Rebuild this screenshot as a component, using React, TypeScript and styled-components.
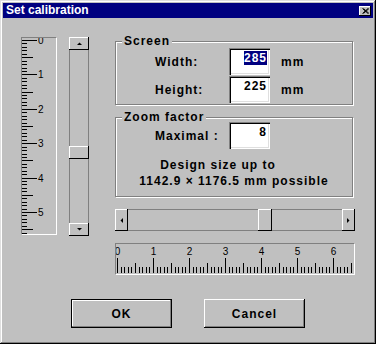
import React from 'react';
import styled, { createGlobalStyle } from 'styled-components';

const GlobalStyle = createGlobalStyle`
  html, body {
    margin: 0;
    padding: 0;
    background: #c0c0c0;
  }
  body {
    font-family: "Liberation Sans", Arial, sans-serif;
  }
`;

const Window = styled.div`
  box-sizing: border-box;
  width: 376px;
  height: 344px;
  padding: 3px;
  background: #c0c0c0;
  display: flex;
  flex-direction: column;
  box-shadow: inset -1px -1px #000, inset 1px 1px #dfdfdf, inset -2px -2px #808080,
    inset 2px 2px #fff;
`;

const TitleBar = styled.div`
  height: 15px;
  background: #000080;
  display: flex;
  align-items: center;
  padding: 0 2px 0 3px;
`;

const Title = styled.div`
  color: #fff;
  font-weight: bold;
  font-size: 12px;
  line-height: 15px;
`;

const CloseButton = styled.div`
  margin-left: auto;
  width: 12px;
  height: 10px;
  background: #c0c0c0;
  box-shadow: inset -1px -1px #000, inset 1px 1px #fff;
  display: flex;
  align-items: center;
  justify-content: center;
`;

const Main = styled.div`
  display: flex;
  align-items: flex-start;
  padding: 17px 0 0 18px;
`;

const RulerBox = styled.div<{ $w: number; $h: number }>`
  box-sizing: border-box;
  width: ${({ $w }) => $w}px;
  height: ${({ $h }) => $h}px;
  flex-shrink: 0;
  border: 1px solid;
  border-color: #808080 #fff #fff #808080;
  background: #c0c0c0;
  svg {
    display: block;
  }
`;

const SideRuler = styled(RulerBox)`
  margin-top: 2px;
`;

const BottomRuler = styled(RulerBox)`
  margin-top: 12px;
`;

const ScrollFrame = styled.div<{ $vertical?: boolean }>`
  display: flex;
  flex-direction: ${({ $vertical }) => ($vertical ? 'column' : 'row')};
  flex-shrink: 0;
  background: #c0c0c0;
`;

const ArrowButton = styled.div<{ $vertical?: boolean }>`
  flex: none;
  width: ${({ $vertical }) => ($vertical ? '100%' : '13px')};
  height: ${({ $vertical }) => ($vertical ? '13px' : '100%')};
  background: #c0c0c0;
  box-shadow: inset -1px -1px #000, inset 1px 1px #fff;
  display: flex;
  align-items: center;
  justify-content: center;
`;

const Track = styled.div<{ $vertical?: boolean }>`
  flex: 1;
  display: flex;
  flex-direction: ${({ $vertical }) => ($vertical ? 'column' : 'row')};
  box-shadow: ${({ $vertical }) =>
    $vertical
      ? 'inset 1px 0 #808080, inset -1px 0 #808080'
      : 'inset 0 1px #808080, inset 0 -1px #808080'};
`;

const Thumb = styled.div<{ $vertical?: boolean }>`
  flex: none;
  width: ${({ $vertical }) => ($vertical ? '100%' : '14px')};
  height: ${({ $vertical }) => ($vertical ? '13px' : '100%')};
  background: #c0c0c0;
  box-shadow: inset -1px -1px #000, inset 1px 1px #fff;
`;

const RightCol = styled.div`
  margin-left: 26px;
  width: 240px;
  display: flex;
  flex-direction: column;
`;

const Group = styled.fieldset<{ $bottom: number; $gapTop?: number }>`
  box-sizing: border-box;
  width: 238px;
  min-width: 0;
  margin: ${({ $gapTop }) => $gapTop ?? 0}px 0 0 0;
  padding: 0 0 ${({ $bottom }) => $bottom}px 0;
  border: 1px solid #808080;
  box-shadow: 1px 1px 0 #fff, inset 1px 1px 0 #fff;
`;

const Legend = styled.legend`
  margin-left: 6px;
  padding: 0 2px;
  font-weight: bold;
  font-size: 12px;
  line-height: 13px;
  letter-spacing: 1px;
  background: #c0c0c0;
`;

const Rows = styled.div`
  display: flex;
  flex-direction: column;
  gap: 1px;
`;

const Row = styled.div<{ $shift?: number }>`
  display: flex;
  align-items: center;
  height: 27px;
  padding-left: 39px;
  margin-top: ${({ $shift }) => $shift ?? 0}px;
`;

const Label = styled.div`
  width: 74px;
  font-weight: bold;
  font-size: 12px;
  letter-spacing: 1px;
`;

const Field = styled.div`
  box-sizing: border-box;
  width: 41px;
  height: 27px;
  padding: 2px 3px 0 0;
  background: #fff;
  text-align: right;
  font-weight: bold;
  font-size: 12px;
  line-height: 16px;
  letter-spacing: 1px;
  box-shadow: inset 1px 1px #808080, inset 2px 2px #000, inset -1px -1px #fff,
    inset -2px -2px #dfdfdf;
`;

const Selected = styled.span`
  background: #000080;
  color: #fff;
`;

const Unit = styled.div`
  margin-left: 11px;
  font-weight: bold;
  font-size: 12px;
  letter-spacing: 1px;
`;

const Note = styled.div`
  margin-top: 8px;
  text-align: center;
  font-weight: bold;
  font-size: 12px;
  line-height: 16px;
  letter-spacing: 1px;
`;

const NoteLine = styled.div<{ $offset?: number }>`
  padding-right: ${({ $offset }) => $offset ?? 0}px;
`;

const ButtonRow = styled.div`
  margin-top: 24px;
  display: flex;
  justify-content: center;
  gap: 32px;
`;

const PushButton = styled.button<{ $default?: boolean }>`
  width: 101px;
  height: 29px;
  padding: 0;
  border: none;
  background: #c0c0c0;
  color: #000;
  font-family: "Liberation Sans", Arial, sans-serif;
  font-weight: bold;
  font-size: 12px;
  letter-spacing: 1px;
  box-shadow: ${({ $default }) =>
    $default
      ? 'inset 0 0 0 1px #000, inset -2px -2px #808080, inset 2px 2px #fff'
      : 'inset -1px -1px #000, inset 1px 1px #fff, inset -2px -2px #808080'};
`;

type Dir = 'up' | 'down' | 'left' | 'right';

const Arrow = ({ dir }: { dir: Dir }) => {
  const pts = {
    up: '0,3 5,3 2.5,0.5',
    down: '0,0 5,0 2.5,2.5',
    left: '3,0 3,5 0.5,2.5',
    right: '0,0 0,5 2.5,2.5',
  }[dir];
  const vertical = dir === 'up' || dir === 'down';
  return (
    <svg width={vertical ? 5 : 3} height={vertical ? 3 : 5}>
      <polygon points={pts} fill="#000" />
    </svg>
  );
};

const ScrollBar = ({
  vertical,
  value,
  className,
}: {
  vertical?: boolean;
  value: number;
  className?: string;
}) => (
  <ScrollFrame $vertical={vertical} className={className}>
    <ArrowButton $vertical={vertical}>
      <Arrow dir={vertical ? 'up' : 'left'} />
    </ArrowButton>
    <Track $vertical={vertical}>
      <div style={{ flexGrow: value }} />
      <Thumb $vertical={vertical} />
      <div style={{ flexGrow: 1 - value }} />
    </Track>
    <ArrowButton $vertical={vertical}>
      <Arrow dir={vertical ? 'down' : 'right'} />
    </ArrowButton>
  </ScrollFrame>
);

const VScroll = styled(ScrollBar)`
  width: 20px;
  height: 199px;
  margin: 2px 0 0 12px;
`;

const HScroll = styled(ScrollBar)`
  width: 240px;
  height: 22px;
  margin-top: 12px;
`;

const RulerText = styled.text`
  font-family: "Liberation Sans", Arial, sans-serif;
  font-size: 10px;
  fill: #000;
`;

// vertical ruler, 3.44px per mm
const VerticalScale = () => {
  const parts: React.ReactNode[] = [];
  for (let i = 0; i <= 60; i++) {
    const y = Math.round(2 + i * 3.44) + 0.5;
    if (y > 196) break;
    const len = i % 10 === 0 ? 15 : i % 5 === 0 ? 11 : 5;
    parts.push(<line key={'t' + i} x1={0} x2={len} y1={y} y2={y} stroke="#000" />);
    if (i % 10 === 0) {
      parts.push(
        <RulerText key={'l' + i} x={16} y={y + 3.5}>
          {i / 10}
        </RulerText>
      );
    }
  }
  return (
    <svg width={34} height={196}>
      {parts}
    </svg>
  );
};

// horizontal ruler, 3.6px per mm
const HorizontalScale = () => {
  const parts: React.ReactNode[] = [];
  for (let i = 0; i <= 70; i++) {
    const x = Math.round(1 + i * 3.6) + 0.5;
    if (x > 238) break;
    const top = i % 10 === 0 ? 14 : i % 5 === 0 ? 19 : 23;
    parts.push(<line key={'t' + i} x1={x} x2={x} y1={top} y2={29} stroke="#000" />);
    if (i % 10 === 0) {
      parts.push(
        <RulerText key={'l' + i} x={x} y={11} textAnchor="middle">
          {i / 10}
        </RulerText>
      );
    }
  }
  return (
    <svg width={238} height={30}>
      {parts}
    </svg>
  );
};

export default function App() {
  return (
    <>
      <GlobalStyle />
      <Window>
        <TitleBar>
          <Title>Set calibration</Title>
          <CloseButton>
            <svg width={7} height={6}>
              <path d="M0.5 0.5 L6 5.5 M1.5 0.5 L7 5.5 M6 0.5 L0.5 5.5 M7 0.5 L1.5 5.5" stroke="#000" strokeWidth={1} />
            </svg>
          </CloseButton>
        </TitleBar>
        <Main>
          <SideRuler $w={36} $h={198}>
            <VerticalScale />
          </SideRuler>
          <VScroll vertical value={0.6} />
          <RightCol>
            <Group $bottom={1}>
              <Legend>Screen</Legend>
              <Rows>
                <Row>
                  <Label>Width:</Label>
                  <Field>
                    <Selected>285</Selected>
                  </Field>
                  <Unit>mm</Unit>
                </Row>
                <Row>
                  <Label>Height:</Label>
                  <Field>225</Field>
                  <Unit>mm</Unit>
                </Row>
              </Rows>
            </Group>
            <Group $bottom={7} $gapTop={6}>
              <Legend>Zoom factor</Legend>
              <Row $shift={-2}>
                <Label>Maximal :</Label>
                <Field>8</Field>
              </Row>
              <Note>
                <NoteLine $offset={32}>Design size up to</NoteLine>
                <NoteLine>1142.9 × 1176.5 mm possible</NoteLine>
              </Note>
            </Group>
            <HScroll value={0.65} />
            <BottomRuler $w={240} $h={32}>
              <HorizontalScale />
            </BottomRuler>
          </RightCol>
        </Main>
        <ButtonRow>
          <PushButton $default>OK</PushButton>
          <PushButton>Cancel</PushButton>
        </ButtonRow>
      </Window>
    </>
  );
}
